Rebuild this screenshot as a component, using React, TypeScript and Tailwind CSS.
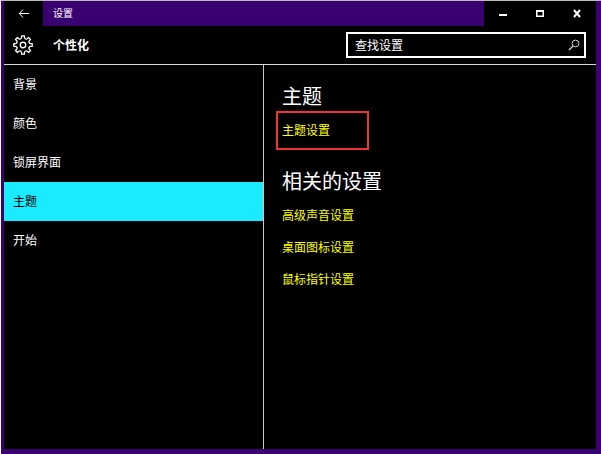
import clsx from 'clsx';

const navItems = ['背景', '颜色', '锁屏界面', '主题', '开始'];
const relatedLinks = ['高级声音设置', '桌面图标设置', '鼠标指针设置'];

// 8-tooth gear outline around the (12, 12) centre
const gearPath =
  Array.from({ length: 8 }, (_, i) => {
    const at = (deg: number, r: number) => {
      const a = ((i * 45 + deg - 90) * Math.PI) / 180;
      return `${(12 + r * Math.cos(a)).toFixed(2)} ${(12 + r * Math.sin(a)).toFixed(2)}`;
    };
    return `${i ? 'L' : 'M'}${at(-9, 10.2)} L${at(9, 10.2)} L${at(11, 8)} Q${at(22.5, 6.4)} ${at(34, 8)}`;
  }).join(' ') + ' Z';

function TitleBar() {
  return (
    <div className="flex h-[25px]">
      <button type="button" aria-label="返回" className="flex w-[39px] items-center justify-center">
        <svg width="12" height="12" viewBox="0 0 12 12" fill="none" stroke="currentColor">
          <path d="M5 1.5 L1.3 5.5 L5 9.5 M1.3 5.5 H11" />
        </svg>
      </button>
      <div className="flex flex-1 items-center bg-[#3b006f] pb-0.5 pl-2.5 text-[10px] leading-4">设置</div>
      <div className="flex w-28 items-center">
        <button type="button" aria-label="最小化" className="flex h-full flex-1 items-center justify-center">
          <svg width="10" height="10" viewBox="0 0 10 10">
            <path d="M1 5 H9 V7 H1 Z" fill="currentColor" />
          </svg>
        </button>
        <button type="button" aria-label="最大化" className="flex h-full flex-1 items-center justify-center">
          <svg width="10" height="10" viewBox="0 0 10 10" fill="none" stroke="currentColor">
            <path d="M1 2 H9" strokeWidth="2" />
            <path d="M1 7.25 H9 M1.75 2 V8 M8.25 2 V8" strokeWidth="1.5" />
          </svg>
        </button>
        <button type="button" aria-label="关闭" className="flex h-full flex-1 items-center justify-center">
          <svg width="10" height="10" viewBox="0 0 10 10" fill="none" stroke="currentColor" strokeWidth="2">
            <path d="M2 1 L8 8 M8 1 L2 8" />
          </svg>
        </button>
      </div>
    </div>
  );
}

function Header() {
  return (
    <header className="flex h-[39px] items-center border-b border-[#d8d8d8] pr-2.5 pl-2">
      <svg width="22" height="22" viewBox="0 0 24 24" fill="none" stroke="currentColor" strokeWidth="1.4" strokeLinejoin="round">
        <path d={gearPath} />
        <circle cx="12" cy="12" r="3" />
      </svg>
      <h1 className="ml-[19px] flex-1 text-xs font-bold">个性化</h1>
      <label className="flex h-[26px] w-60 items-center border-2 border-white pr-1 pl-[7px]">
        <input
          type="text"
          aria-label="查找设置"
          placeholder="查找设置"
          className="min-w-0 flex-1 bg-transparent text-xs outline-none placeholder:text-white"
        />
        <svg width="12" height="12" viewBox="0 0 12 12" fill="none" stroke="#d0d0d0">
          <circle cx="7.5" cy="4.5" r="3.4" />
          <path d="M5 7 L1 11" strokeWidth="1.3" />
        </svg>
      </label>
    </header>
  );
}

export default function App() {
  return (
    <div className="flex min-h-screen flex-col border-t border-l border-t-[#bbbbbb] border-l-white font-['Noto_Sans_CJK_SC',sans-serif] text-white">
      <div className="flex flex-1 flex-col border-t-0 border-r-[5px] border-b-[5px] border-l-[3px] border-[#3b006f] bg-black">
        <TitleBar />
        <Header />
        <div className="flex flex-1">
          <nav className="w-[260px] border-r border-[#c8c8c8]">
            {navItems.map((item) => (
              <a
                key={item}
                href="#"
                className={clsx(
                  'flex h-[39px] items-center pb-0.5 pl-[9px] text-xs',
                  item === '主题' && 'bg-[#1aebff] text-black',
                )}
              >
                {item}
              </a>
            ))}
          </nav>
          <main className="flex-1 pt-4 pl-[18px]">
            <h2 className="text-xl leading-[30px]">主题</h2>
            <a
              href="#"
              className="-ml-1.5 flex h-[39px] w-[93px] items-center border-2 border-[#f03434] pb-0.5 pl-1 text-xs text-[#ffff00]"
            >
              主题设置
            </a>
            <h2 className="mt-4 text-xl leading-[30px]">相关的设置</h2>
            <ul className="mt-1">
              {relatedLinks.map((link) => (
                <li key={link} className="flex h-8 items-center pb-0.5">
                  <a href="#" className="text-xs text-[#ffff00]">
                    {link}
                  </a>
                </li>
              ))}
            </ul>
          </main>
        </div>
      </div>
    </div>
  );
}
